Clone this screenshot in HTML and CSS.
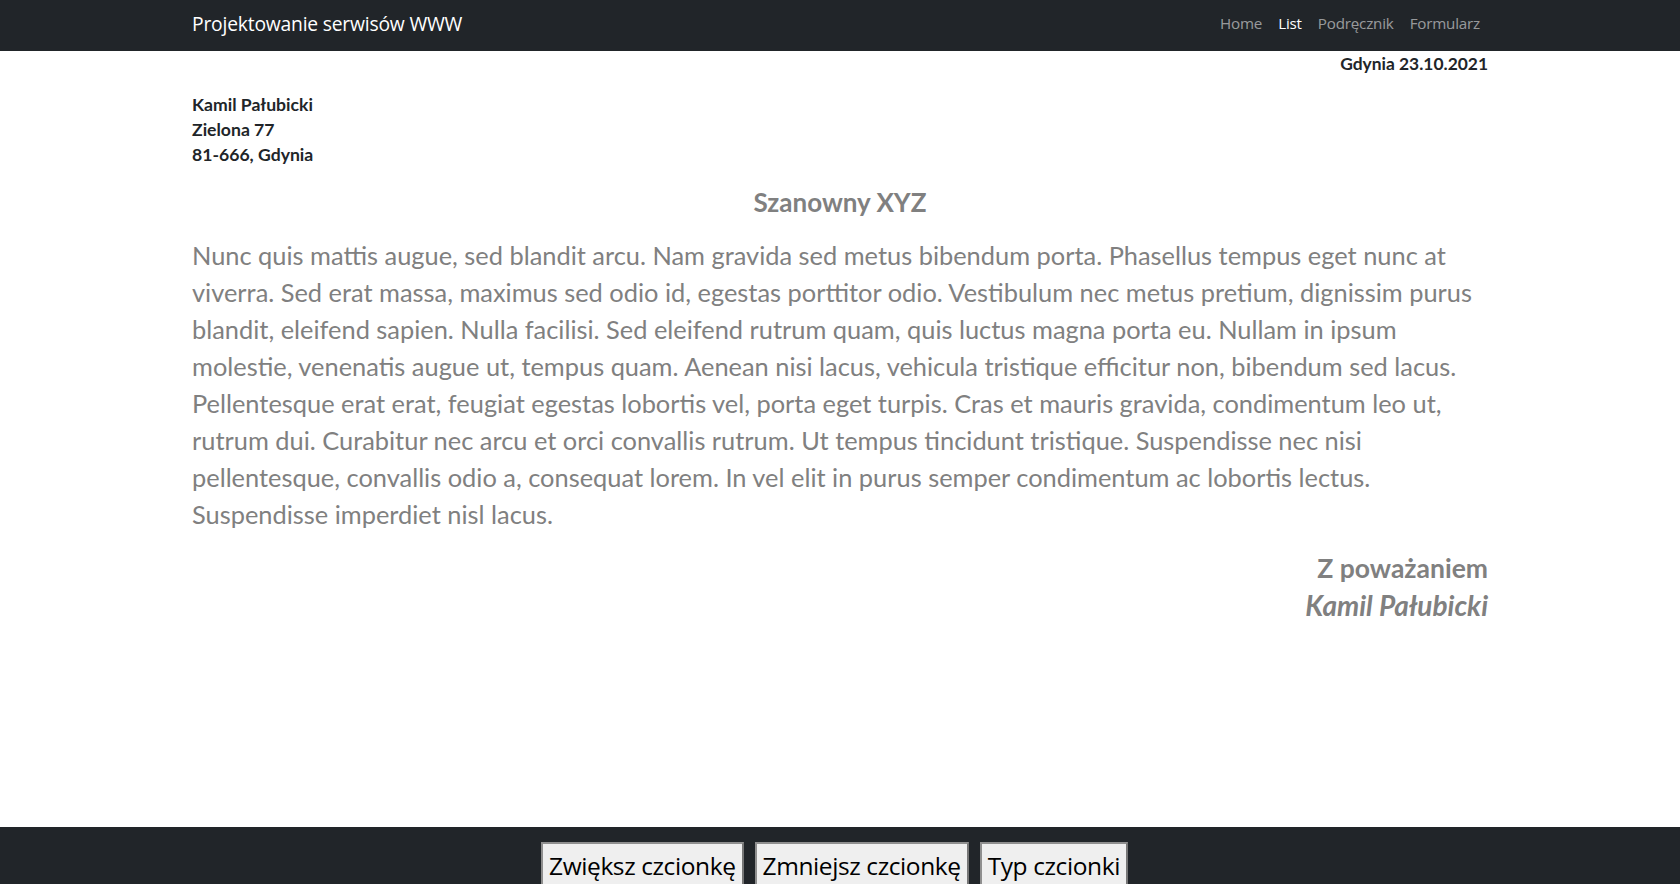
FILE: index.html
```html
<!DOCTYPE html>
<html lang="pl">
<head>
<meta charset="utf-8">
<title>List</title>
<link rel="stylesheet" href="styles.css">
</head>
<body>
<nav class="navbar">
  <div class="container nav-inner">
    <a class="brand" href="#">Projektowanie serwisów WWW</a>
    <ul class="nav-links">
      <li><a class="nav-link" href="#">Home</a></li>
      <li><a class="nav-link active" href="#">List</a></li>
      <li><a class="nav-link" href="#">Podręcznik</a></li>
      <li><a class="nav-link" href="#">Formularz</a></li>
    </ul>
  </div>
</nav>
<main class="container letter">
  <p class="date">Gdynia 23.10.2021</p>
  <address class="sender">
    Kamil Pałubicki<br>
    Zielona 77<br>
    81-666, Gdynia
  </address>
  <h2 class="greeting">Szanowny XYZ</h2>
  <p class="content">Nunc quis mattis augue, sed blandit arcu. Nam gravida sed metus bibendum porta. Phasellus tempus eget nunc at viverra. Sed erat massa, maximus sed odio id, egestas porttitor odio. Vestibulum nec metus pretium, dignissim purus blandit, eleifend sapien. Nulla facilisi. Sed eleifend rutrum quam, quis luctus magna porta eu. Nullam in ipsum molestie, venenatis augue ut, tempus quam. Aenean nisi lacus, vehicula tristique efficitur non, bibendum sed lacus. Pellentesque erat erat, feugiat egestas lobortis vel, porta eget turpis. Cras et mauris gravida, condimentum leo ut, rutrum dui. Curabitur nec arcu et orci convallis rutrum. Ut tempus tincidunt tristique. Suspendisse nec nisi pellentesque, convallis odio a, consequat lorem. In vel elit in purus semper condimentum ac lobortis lectus. Suspendisse imperdiet nisl lacus.</p>
  <div class="signature">
    <div class="regards">Z poważaniem</div>
    <div class="signer">Kamil Pałubicki</div>
  </div>
</main>
<footer class="footer">
  <button class="btn" type="button">Zwiększ czcionkę</button>
  <button class="btn" type="button">Zmniejsz czcionkę</button>
  <button class="btn" type="button">Typ czcionki</button>
</footer>
</body>
</html>
```
FILE: styles.css
```css
* { box-sizing: border-box; }
html, body { margin: 0; padding: 0; }
body {
  height: 100vh;
  overflow: hidden;
  display: flex;
  flex-direction: column;
  font-family: Lato, "Open Sans", sans-serif;
  font-size: 16px;
  line-height: 1.5;
  color: #212529;
  background: #fff;
}
.container {
  width: 1320px;
  margin: 0 auto;
  padding: 0 12px;
}
.navbar {
  background: #212529;
  height: 51px;
  flex: none;
}
.nav-inner {
  height: 100%;
  display: flex;
  align-items: center;
  justify-content: space-between;
}
.brand {
  font-family: "Open Sans", sans-serif;
  color: #fff;
  text-decoration: none;
  font-size: 19.3px;
  letter-spacing: -0.2px;
  margin-top: -2px;
}
.nav-links {
  list-style: none;
  margin: -4px 0 0 0;
  padding: 0;
  display: flex;
}
.nav-link {
  display: block;
  padding: 0 8px;
  font-family: "Open Sans", sans-serif;
  font-size: 15.2px;
  letter-spacing: -0.2px;
  color: rgba(255,255,255,.55);
  text-decoration: none;
}
.nav-link.active { color: #fff; }
.letter { flex: 1; }
.date {
  margin: 0;
  text-align: right;
  font-weight: 700;
  font-size: 17.4px;
}
.sender {
  margin: 14.5px 0 0;
  font-style: normal;
  font-weight: 700;
  font-size: 17.6px;
  line-height: 25px;
}
.greeting {
  margin: 16.5px 0 0;
  text-align: center;
  font-size: 26px;
  font-weight: 700;
  color: #808080;
  line-height: 39px;
}
.content {
  margin: 14.5px 0 0;
  font-size: 25.4px;
  line-height: 37px;
  color: #808080;
}
.signature {
  margin-top: 17.5px;
  text-align: right;
  color: #808080;
  font-weight: 700;
  line-height: 36.5px;
}
.regards { font-size: 26.5px; }
.signer { font-style: italic; font-size: 28px; }
.footer {
  flex: none;
  height: 57px;
  overflow: hidden;
  background: #212529;
  padding-top: 15px;
  display: flex;
  justify-content: center;
  align-items: flex-start;
  gap: 11px;
  padding-right: 11px;
}
.btn {
  font-family: "Open Sans", sans-serif;
  font-size: 24.5px;
  letter-spacing: -0.4px;
  line-height: 1.4;
  padding: 5px 6px 6px;
  background: #efefef;
  color: #000;
  border: 2px solid #767676;
  border-color: #8f8f8f #767676 #767676 #8f8f8f;
  border-radius: 0;
}
```
